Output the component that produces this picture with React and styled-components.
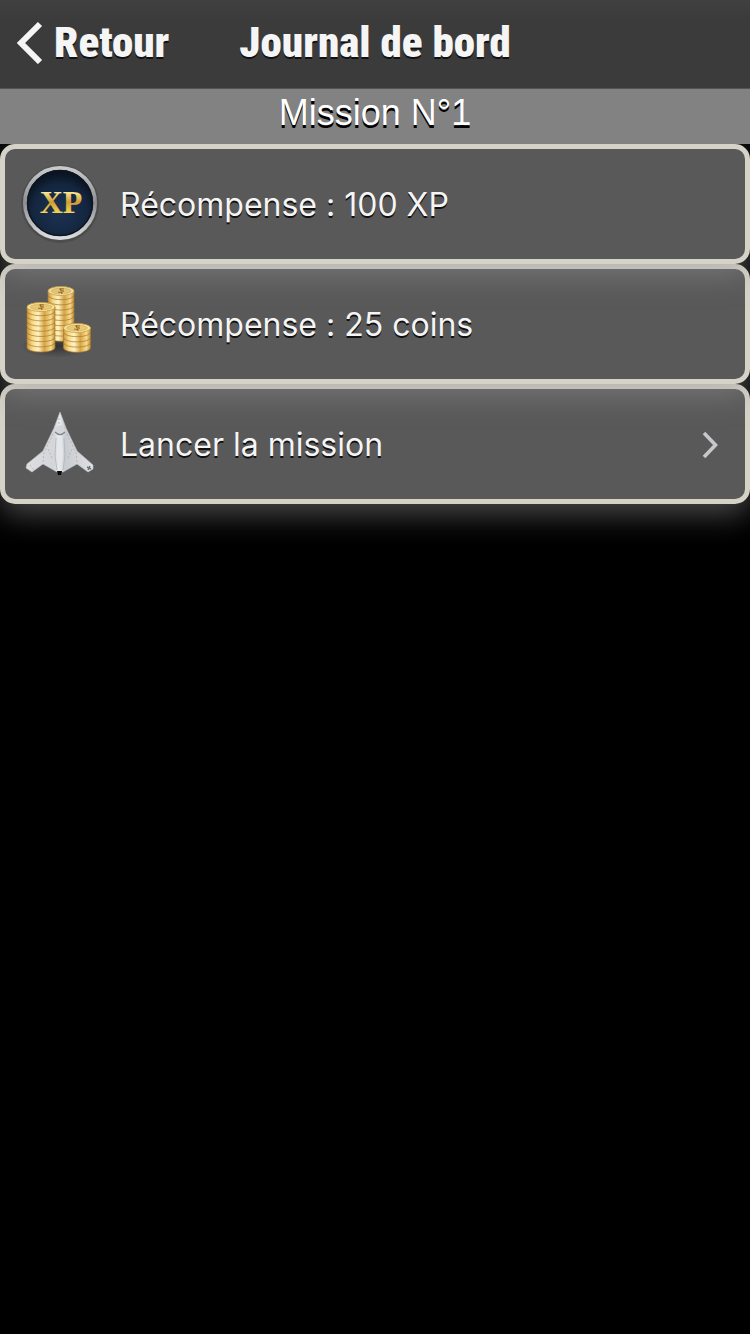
import React from "react";
import styled, { createGlobalStyle } from "styled-components";

const GlobalStyle = createGlobalStyle`
  * { box-sizing: border-box; }
  body {
    margin: 0;
    background: #000;
    font-family: Inter, "Liberation Sans", sans-serif;
  }
`;

const Screen = styled.div`
  min-height: 100vh;
  background: #000;
`;

const NavBar = styled.header`
  display: grid;
  grid-template-columns: 1fr auto 1fr;
  align-items: center;
  height: 89px;
  padding: 0 16px 4px;
  color: #f5f5f5;
  background: linear-gradient(#404040, #3b3b3b 20px);
  border-bottom: 1px solid #555;
  font-family: "Liberation Sans Narrow", "Roboto Condensed", sans-serif;
  font-size: 43px;
  font-weight: 900;
  line-height: 48px;
  text-shadow: 0 2px 0 #111;
`;

const BackButton = styled.button`
  display: flex;
  align-items: center;
  gap: 10px;
  justify-self: start;
  padding: 0;
  border: 0;
  background: none;
  color: inherit;
  font: inherit;
  text-shadow: inherit;
  cursor: pointer;
`;

const Title = styled.h1`
  margin: 0;
  font: inherit;
`;

const SectionTitle = styled.h2`
  margin: 0;
  height: 55px;
  color: #fff;
  background: #828282;
  font-family: "Liberation Sans", sans-serif;
  font-size: 36px;
  font-weight: 400;
  line-height: 48px;
  text-align: center;
  text-shadow: 0 3px 0 #000;
`;

const List = styled.ul`
  margin: 0;
  padding: 0;
  list-style: none;
  isolation: isolate;
  clip-path: inset(0 0 -80px 0);
`;

/* Earlier rows stack above later ones so that their glow falls on the next row. */
const Item = styled.li`
  position: relative;
  z-index: ${(p) => p.$level};
  border-radius: 15px;
  box-shadow: 0 10px 30px rgba(150, 150, 150, 0.5);
`;

const Row = styled.div`
  display: flex;
  align-items: center;
  gap: 20px;
  width: 100%;
  height: 120px;
  padding: 0 25px 0 15px;
  border: 5px solid #d5d2c8;
  border-radius: 15px;
  background: #595959;
  color: #f5f5f5;
  font-family: inherit;
  font-size: 32px;
  font-weight: 400;
  font-feature-settings: "calt" 0;
  line-height: 40px;
  text-align: left;
  text-shadow: 0 2px 0 #111;
`;

const Label = styled.span`
  flex: 1;
  padding-top: 2px;
`;

const BackChevron = () => (
  <svg width="28" height="44" viewBox="0 0 28 44" fill="none" aria-hidden="true">
    <path d="M24 4 L5 23 L24 42" stroke="#f5f5f5" strokeWidth="6" />
  </svg>
);

const Disclosure = () => (
  <svg width="20" height="30" viewBox="0 0 20 30" fill="none" aria-hidden="true">
    <path d="M4 4 L15.500 16 L4 28" stroke="#c7c7cc" strokeWidth="3.600" />
  </svg>
);

const BadgeText = styled.text`
  font-family: "Liberation Serif", serif;
  font-size: 32px;
  font-weight: 700;
  text-shadow: none;
`;

const XpIcon = () => (
  <svg width="80" height="80" viewBox="0 0 80 80" aria-hidden="true">
    <defs>
      <radialGradient id="xpFace" cx="50%" cy="62%" r="55%">
        <stop offset="0" stopColor="#1b3353" />
        <stop offset="0.7" stopColor="#14263f" />
        <stop offset="1" stopColor="#0a1422" />
      </radialGradient>
      <linearGradient id="xpRing" x1="0" y1="0" x2="0" y2="1">
        <stop offset="0" stopColor="#c9cacc" />
        <stop offset="0.5" stopColor="#8d8e92" />
        <stop offset="1" stopColor="#dcdde0" />
      </linearGradient>
      <linearGradient id="xpGold" x1="0" y1="0" x2="0" y2="1">
        <stop offset="0.2" stopColor="#fff0a0" />
        <stop offset="0.5" stopColor="#d09c30" />
        <stop offset="0.8" stopColor="#f5d254" />
      </linearGradient>
    </defs>
    <circle cx="40" cy="40" r="39" fill="#3d3d3d" opacity="0.4" />
    <circle cx="40" cy="39" r="35" fill="url(#xpFace)" stroke="url(#xpRing)" strokeWidth="4" />
    <circle cx="40" cy="39" r="32.500" fill="none" stroke="#10151d" strokeWidth="1.500" />
    <BadgeText x="41" y="49" textAnchor="middle" fill="url(#xpGold)">
      XP
    </BadgeText>
  </svg>
);

const CoinStack = ({ cx, rx, top, count, step }) => (
  <g>
    {Array.from({ length: count }, (_, i) => count - 1 - i).map((i) => {
      const y = top + i * step;
      return (
        <path
          key={i}
          d={`M${cx - rx} ${y} v${step - 1} a${rx} 4.500 0 0 0 ${rx * 2} 0 v${1 - step} z`}
          fill="url(#coinEdge)"
          stroke="#a8782a"
          strokeWidth="0.700"
        />
      );
    })}
    <ellipse cx={cx} cy={top} rx={rx} ry="4.500" fill="#f8e6a6" stroke="#c99a3c" strokeWidth="0.800" />
    <ellipse cx={cx} cy={top} rx={rx - 3} ry="2.800" fill="#eac873" stroke="#d3a84b" strokeWidth="0.600" />
    <path
      d={`M${cx + 3} ${top - 2} q-5 -1 -4 1 q5 0 3 2 q-3 1 -5 0 M${cx - 1} ${top - 3} l2 6`}
      fill="none"
      stroke="#8e6724"
      strokeWidth="0.900"
    />
  </g>
);

const CoinsIcon = () => (
  <svg width="80" height="80" viewBox="0 0 80 80" aria-hidden="true">
    <defs>
      <linearGradient id="coinEdge">
        <stop offset="0" stopColor="#cf983b" />
        <stop offset="0.200" stopColor="#f7db8a" />
        <stop offset="0.400" stopColor="#fff3c4" />
        <stop offset="0.620" stopColor="#d7a445" />
        <stop offset="0.850" stopColor="#f6db90" />
        <stop offset="1" stopColor="#c58e32" />
      </linearGradient>
      <radialGradient id="coinShade">
        <stop offset="0" stopColor="#222" stopOpacity="0.700" />
        <stop offset="1" stopColor="#222" stopOpacity="0" />
      </radialGradient>
    </defs>
    <ellipse cx="36" cy="62" rx="36" ry="12" fill="url(#coinShade)" />
    <CoinStack cx={41} rx={13} top={7} count={9} step={5.2} />
    <CoinStack cx={21} rx={14} top={23} count={8} step={5.2} />
    <CoinStack cx={57} rx={13.5} top={44} count={4} step={5.2} />
  </svg>
);

const PlaneIcon = () => (
  <svg width="80" height="80" viewBox="0 0 80 80" aria-hidden="true">
    <defs>
      <linearGradient id="hull">
        <stop offset="0" stopColor="#dedfe3" />
        <stop offset="0.420" stopColor="#d3d5d9" />
        <stop offset="0.500" stopColor="#eceef0" />
        <stop offset="0.580" stopColor="#c8cbd0" />
        <stop offset="1" stopColor="#e0e1e4" />
      </linearGradient>
    </defs>
    <path
      d="M40 8 L46 24 L57 47 L73 61 L73 65 L68 68 L57 60 L43 68 L37 68 L23 60 L12 68 L6 64 L7 60 L23 47 L34 24 Z"
      fill="url(#hull)"
      stroke="#c4c6ca"
      strokeWidth="0.600"
    />
    <path d="M36 24 Q40 18 44 24 L45 29 Q40 33 35 29 Z" fill="#d3d7dc" />
    <path d="M35 28 Q40 33 45 28" fill="none" stroke="#7d838b" strokeWidth="1.200" />
    <path d="M36 34 L35 52 L37 66 M44 34 L45 52 L43 66" fill="none" stroke="#b4b8bd" strokeWidth="0.900" />
    <path d="M38 33 h4 l1 18 l-2 14 h-2 l-2 -14 z" fill="#e4e7ea" />
    <path
      d="M33 30 L25 47 M47 30 L55 47 M24 48 L23 59 M56 48 L57 59 M28 45 L33 56 M52 45 L47 56 M10 61 L14 66 M39 14 v6"
      fill="none"
      stroke="#aaaeb3"
      strokeWidth="0.800"
      strokeDasharray="2 2"
    />
    <path d="M67 63 l4 2 M70 62 l-2 4" stroke="#6d7178" strokeWidth="1.500" />
    <path d="M37 67 h5 l-1 4 h-3 z" fill="#0c0808" />
  </svg>
);

export default function App() {
  return (
    <Screen>
      <GlobalStyle />
      <NavBar>
        <BackButton type="button">
          <BackChevron />
          Retour
        </BackButton>
        <Title>Journal de bord</Title>
      </NavBar>
      <main>
        <SectionTitle>Mission N°1</SectionTitle>
        <List>
          <Item $level={3}>
            <Row>
              <XpIcon />
              <Label>Récompense : 100 XP</Label>
            </Row>
          </Item>
          <Item $level={2}>
            <Row>
              <CoinsIcon />
              <Label>Récompense : 25 coins</Label>
            </Row>
          </Item>
          <Item $level={1}>
            <Row as="button" type="button">
              <PlaneIcon />
              <Label>Lancer la mission</Label>
              <Disclosure />
            </Row>
          </Item>
        </List>
      </main>
    </Screen>
  );
}
